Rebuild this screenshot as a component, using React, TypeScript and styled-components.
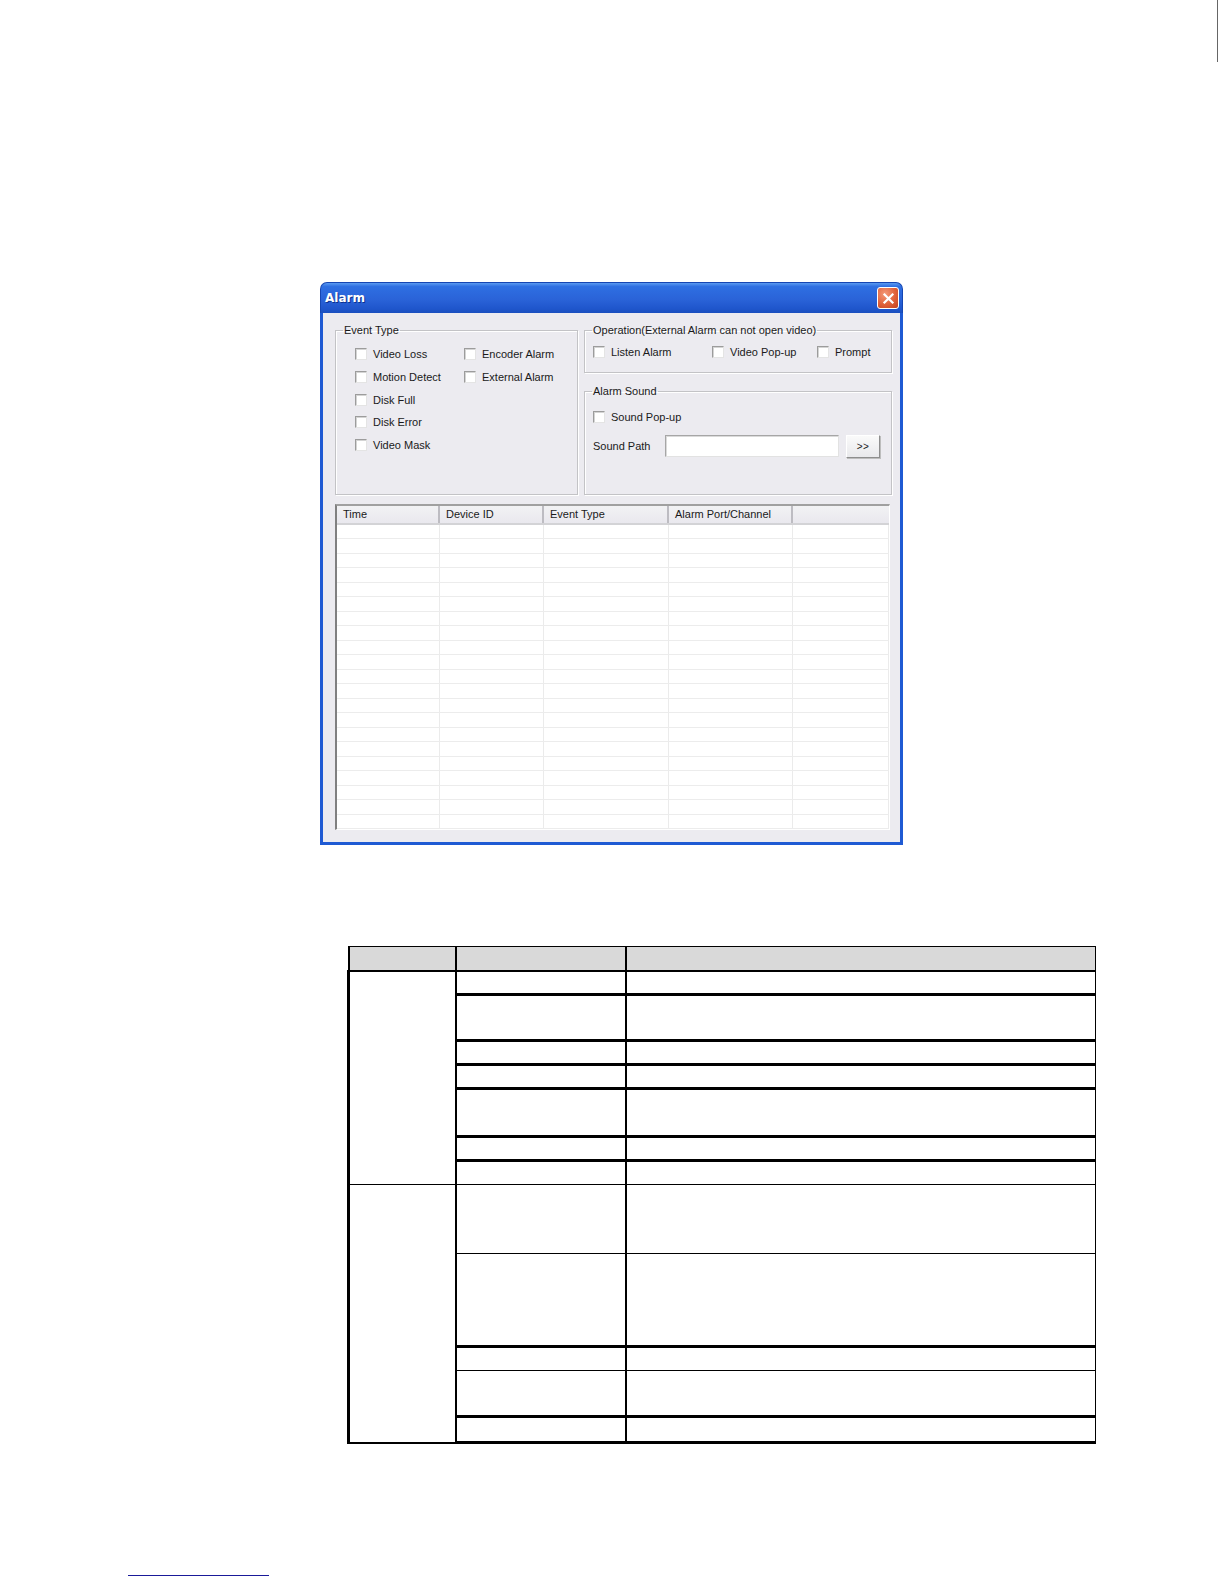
import React from 'react';
import styled, { createGlobalStyle } from 'styled-components';

const GlobalStyle = createGlobalStyle`
    html, body {
        margin: 0;
        padding: 0;
        background: #ffffff;
    }
    body {
        font-family: "Liberation Sans", Arial, sans-serif;
    }
`;

const eventTypes = [
    ['Video Loss', 'Encoder Alarm'],
    ['Motion Detect', 'External Alarm'],
    ['Disk Full', ''],
    ['Disk Error', ''],
    ['Video Mask', ''],
];

const listColumns = [
    { title: 'Time', width: 103 },
    { title: 'Device ID', width: 104 },
    { title: 'Event Type', width: 125 },
    { title: 'Alarm Port/Channel', width: 124 },
    { title: '', width: 96 },
];

// heights of the rows of the description table, and whether the line under them is thin
const groupOne = [
    { h: 24, thin: false },
    { h: 46, thin: false },
    { h: 24, thin: false },
    { h: 24, thin: false },
    { h: 48, thin: false },
    { h: 24, thin: false },
    { h: 24, thin: true },
];
const groupTwo = [
    { h: 69, thin: true },
    { h: 93, thin: false },
    { h: 24, thin: true },
    { h: 46, thin: false },
    { h: 26, thin: false },
];

const Checkbox: React.FC = () => <Box />;

const CheckItem: React.FC<{ label: string }> = ({ label }) => (
    <CheckRow>
        <Checkbox />
        <span>{label}</span>
    </CheckRow>
);

const App: React.FC = () => {
    const rows = Array.from({ length: 22 });
    return (
        <Page>
            <GlobalStyle />
            <TopStrip>
                <MarginRule />
            </TopStrip>

            <Window>
                <TitleBar>
                    <Title>Alarm</Title>
                    <CloseButton>
                        <svg width="13" height="13" viewBox="0 0 13 13">
                            <path d="M2.5 2.5 L10.5 10.5 M10.5 2.5 L2.5 10.5" stroke="#fff" strokeWidth="2.2" strokeLinecap="square" />
                        </svg>
                    </CloseButton>
                </TitleBar>
                <Body>
                    <TopSection>
                        <Group width={243} height={171}>
                            <Legend>Event Type</Legend>
                            <EventGrid>
                                {eventTypes.map(([a, b]) => (
                                    <React.Fragment key={a}>
                                        <CheckItem label={a} />
                                        {b ? <CheckItem label={b} /> : <span />}
                                    </React.Fragment>
                                ))}
                            </EventGrid>
                        </Group>
                        <RightColumn>
                            <Group width={308} height={49}>
                                <Legend>Operation(External Alarm can not open video)</Legend>
                                <OperationRow>
                                    <CheckItem label="Listen Alarm" />
                                    <CheckItem label="Video Pop-up" />
                                    <CheckItem label="Prompt" />
                                </OperationRow>
                            </Group>
                            <Group width={308} height={110}>
                                <Legend>Alarm Sound</Legend>
                                <SoundBody>
                                    <CheckItem label="Sound Pop-up" />
                                    <PathRow>
                                        <span>Sound Path</span>
                                        <PathInput />
                                        <BrowseButton>&gt;&gt;</BrowseButton>
                                    </PathRow>
                                </SoundBody>
                            </Group>
                        </RightColumn>
                    </TopSection>

                    <List>
                        <ListHeader>
                            {listColumns.map((c, i) => (
                                <HeaderCell key={i} style={{ width: c.width }} last={i === listColumns.length - 1}>
                                    {c.title}
                                </HeaderCell>
                            ))}
                        </ListHeader>
                        {rows.map((_, r) => (
                            <ListRow key={r}>
                                {listColumns.map((c, i) => (
                                    <ListCell key={i} style={{ width: c.width }} />
                                ))}
                            </ListRow>
                        ))}
                    </List>
                </Body>
            </Window>

            <DocTable>
                <colgroup>
                    <col style={{ width: 107 }} />
                    <col style={{ width: 170 }} />
                    <col style={{ width: 470 }} />
                </colgroup>
                <tbody>
                    <HeadRow>
                        <HeadCell />
                        <HeadCell />
                        <HeadCell />
                    </HeadRow>
                    {groupOne.map((row, i) => (
                        <tr key={`a${i}`} style={{ height: row.h }}>
                            {i === 0 && <GroupCell rowSpan={groupOne.length} thin />}
                            <Cell thin={row.thin} />
                            <Cell thin={row.thin} />
                        </tr>
                    ))}
                    {groupTwo.map((row, i) => (
                        <tr key={`b${i}`} style={{ height: row.h }}>
                            {i === 0 && <GroupCell rowSpan={groupTwo.length} />}
                            <Cell thin={row.thin} />
                            <Cell thin={row.thin} />
                        </tr>
                    ))}
                </tbody>
            </DocTable>

            <FooterLink />
        </Page>
    );
};

export default App;

const Page = styled.div`
    width: 1224px;
    min-height: 1584px;
    background: #ffffff;
    display: flex;
    flex-direction: column;
`;

const TopStrip = styled.div`
    height: 282px;
    display: flex;
    justify-content: flex-end;
    align-items: flex-start;
`;

const MarginRule = styled.div`
    width: 1px;
    height: 62px;
    background: #666;
    margin-right: 6px;
`;

const Window = styled.div`
    margin-left: 320px;
    width: 583px;
    height: 563px;
    display: flex;
    flex-direction: column;
    font-family: "Liberation Sans", Arial, sans-serif;
    font-size: 11px;
    color: #1a1a1a;
`;

const TitleBar = styled.div`
    height: 31px;
    box-sizing: border-box;
    border-radius: 7px 7px 0 0;
    background: linear-gradient(180deg, #5a9af0 0%, #2e6fe2 12%, #2a63d8 55%, #1f56cc 85%, #1a4fbf 100%);
    border: 1px solid #1546b3;
    border-bottom: none;
    display: flex;
    align-items: center;
    justify-content: space-between;
    padding: 0 3px 0 4px;
`;

const Title = styled.span`
    font-family: "DejaVu Sans", Verdana, sans-serif;
    font-weight: 700;
    font-size: 12px;
    color: #ffffff;
    text-shadow: 1px 1px 0 #0c3290;
`;

const CloseButton = styled.div`
    width: 22px;
    height: 22px;
    box-sizing: border-box;
    border: 1px solid #ffffff;
    border-radius: 3px;
    background: radial-gradient(circle at 35% 30%, #f49a78 0%, #e0613a 55%, #c4411d 100%);
    display: flex;
    align-items: center;
    justify-content: center;
`;

const Body = styled.div`
    flex: 1;
    background: #ecebf0;
    border: 3px solid #1f5ad3;
    border-top: none;
    padding: 11px 7px 12px 12px;
    display: flex;
    flex-direction: column;
`;

const TopSection = styled.div`
    display: flex;
    gap: 6px;
`;

const RightColumn = styled.div`
    display: flex;
    flex-direction: column;
    gap: 12px;
`;

const Group = styled.fieldset<{ width: number; height: number }>`
    margin: 0;
    width: ${({ width }) => width}px;
    height: ${({ height }) => height}px;
    box-sizing: border-box;
    border: 1px solid #c3c3c6;
    box-shadow: inset 1px 1px 0 #ffffff, 1px 1px 0 #ffffff;
    padding: 0 8px;
`;

const Legend = styled.legend`
    padding: 0 1px;
    margin-left: -1px;
    font-size: 11px;
    line-height: 13px;
    color: #1a1a1a;
`;

const EventGrid = styled.div`
    display: grid;
    grid-template-columns: 109px auto;
    row-gap: 9.8px;
    padding: 10.5px 0 0 11px;
`;

const OperationRow = styled.div`
    display: grid;
    grid-template-columns: 119px 105px auto;
    padding-top: 8px;
`;

const SoundBody = styled.div`
    display: flex;
    flex-direction: column;
    gap: 11px;
    padding-top: 12.5px;
`;

const CheckRow = styled.label`
    display: flex;
    align-items: center;
    gap: 6px;
    height: 13px;
    white-space: nowrap;
`;

const Box = styled.span`
    width: 12px;
    height: 12px;
    box-sizing: border-box;
    background: #ffffff;
    border-style: solid;
    border-width: 1px;
    border-color: #9c9c9c #e4e4e4 #e4e4e4 #9c9c9c;
    box-shadow: inset 1px 1px 0 #d4d4d4;
    flex-shrink: 0;
`;

const PathRow = styled.div`
    display: flex;
    align-items: center;

    > span {
        width: 72px;
    }
`;

const PathInput = styled.div`
    width: 174px;
    height: 22px;
    box-sizing: border-box;
    background: #ffffff;
    border-style: solid;
    border-width: 1px;
    border-color: #a6a6a6 #e2e2e2 #e2e2e2 #a6a6a6;
    box-shadow: inset 1px 1px 0 #dadada;
`;

const BrowseButton = styled.div`
    width: 34px;
    height: 23px;
    margin-left: 7px;
    box-sizing: border-box;
    background: linear-gradient(180deg, #fafafa, #e9e9ec);
    border-style: solid;
    border-width: 1px;
    border-color: #ffffff #8e8e8e #8e8e8e #ffffff;
    box-shadow: 1px 1px 0 #bdbdbd;
    display: flex;
    align-items: center;
    justify-content: center;
    font-size: 10px;
    letter-spacing: 0.5px;
`;

const List = styled.div`
    margin-top: 8.5px;
    width: 555px;
    height: 326px;
    box-sizing: border-box;
    background: #ffffff;
    border-style: solid;
    border-width: 2px 1px 1px 2px;
    border-color: #a0a0a0 #ffffff #ffffff #808080;
    overflow: hidden;
`;

const ListHeader = styled.div`
    display: flex;
    height: 17px;
    background: linear-gradient(180deg, #f2f2f4, #e9e8ee);
    border-bottom: 2px solid #d3d3d6;
`;

const HeaderCell = styled.div<{ last?: boolean }>`
    box-sizing: border-box;
    padding-left: 6px;
    line-height: 17px;
    border-right: ${({ last }) => (last ? 'none' : '2px solid #bdbcc2')};
    flex-shrink: 0;
`;

const ListRow = styled.div`
    display: flex;
    height: 14.5px;
    box-sizing: border-box;
    border-bottom: 1px solid #ececec;
`;

const ListCell = styled.div`
    box-sizing: border-box;
    border-right: 1px solid #ebebeb;
    flex-shrink: 0;
`;

const DocTable = styled.table`
    margin: 101px 0 0 347px;
    width: 747px;
    border-collapse: collapse;
    table-layout: fixed;
`;

const HeadRow = styled.tr`
    height: 24px;
`;

const HeadCell = styled.td`
    background: #d9d9d9;
    border-top: 1px solid #000;
    border-bottom: 2px solid #000;
    border-left: 2px solid #000;
    border-right: 1px solid #000;
    padding: 0;
`;

const GroupCell = styled.td<{ thin?: boolean }>`
    border-left: 3px solid #000;
    border-right: 2px solid #000;
    border-bottom: ${({ thin }) => (thin ? '1px' : '2px')} solid #000;
    padding: 0;
`;

const Cell = styled.td<{ thin?: boolean }>`
    border-right: 1px solid #000;
    border-left: 2px solid #000;
    border-bottom: ${({ thin }) => (thin ? '1px' : '3px')} solid #000;
    padding: 0;
`;

const FooterLink = styled.div`
    margin: 131px 0 0 128px;
    width: 141px;
    height: 1px;
    background: #1a1a99;
`;
